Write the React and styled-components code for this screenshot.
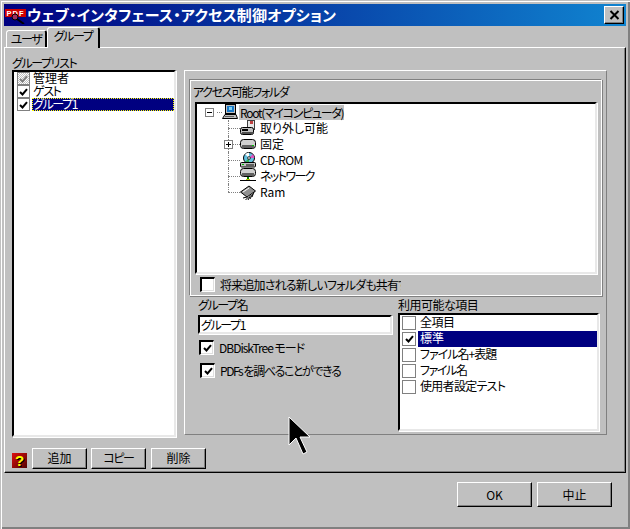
import React from "react";
import styled, { createGlobalStyle, css } from "styled-components";

const Global = createGlobalStyle`
  html, body { margin: 0; padding: 0; background: #c0c0c0; }
  * { box-sizing: border-box; }
  body {
    font-family: "Noto Sans CJK JP", "Liberation Sans", sans-serif;
    font-size: 12px;
    line-height: 14px;
    color: #000;
    font-feature-settings: "palt";
  }
`;

const sunken = css`
  border-style: solid;
  border-width: 2px;
  border-color: #000 #e8e8e8 #e8e8e8 #000;
  box-shadow: 1px 1px 0 #fff;
  background: #fff;
`;
const raised = css`
  background: #c0c0c0;
  border-style: solid;
  border-width: 1px;
  border-color: #fff #000 #000 #fff;
  box-shadow: inset -1px -1px 0 #808080;
`;

const Tight = styled.span`
  letter-spacing: ${(p) => p.$ls ?? -1.4}px;
`;
const Window = styled.div`
  position: relative;
  width: 630px;
  height: 529px;
  padding: 4px;
  background: #c0c0c0;
  box-shadow: inset 1px 1px 0 #c0c0c0, inset 2px 2px 0 #fff, inset -2px -2px 0 #808080, inset -1px -1px 0 #000;
  display: flex;
  flex-direction: column;
`;
const TitleBar = styled.div`
  height: 22px;
  flex: none;
  display: flex;
  align-items: center;
  padding: 0 2px 0 1px;
  background: linear-gradient(90deg, #000080, #1084d0);
  color: #fff;
`;
const TitleText = styled.div`
  flex: 1;
  font-size: 15px;
  font-weight: 700;
  line-height: 22px;
  letter-spacing: 0.2px;
  white-space: nowrap;
`;
const CloseButton = styled.button`
  ${raised}
  width: 20px;
  height: 18px;
  padding: 0;
  display: flex;
  align-items: center;
  justify-content: center;
`;
const TabStrip = styled.div`
  height: 20px;
  flex: none;
  display: flex;
  align-items: flex-end;
  padding-left: 2px;
  margin-top: 1px;
  position: relative;
  z-index: 1;
`;
const Tab = styled.div`
  height: ${(p) => (p.$active ? 21 : 17)}px;
  width: ${(p) => (p.$active ? 53 : 41)}px;
  margin-bottom: ${(p) => (p.$active ? -1 : 0)}px;
  border-style: solid;
  border-width: 1px 2px 0 1px;
  border-color: #fff #000 transparent #fff;
  border-radius: 3px 3px 0 0;
  background: #c0c0c0;
  text-align: center;
  padding-top: 1px;
  white-space: nowrap;
`;
const TabPanel = styled.div`
  width: 622px;
  height: 426px;
  flex: none;
  border-style: solid;
  border-width: 1px;
  border-color: #fff #000 #000 #fff;
  box-shadow: inset -1px -1px 0 #808080;
  padding: 8px 7px 0 7px;
  display: grid;
  grid-template-columns: 164px 1fr;
  grid-template-rows: 388px auto;
  column-gap: 8px;
`;
const ListColumn = styled.div`
  display: flex;
  flex-direction: column;
  padding-bottom: 7px;
`;
const Caption = styled.div`
  height: 14px;
  white-space: nowrap;
`;
const GroupList = styled.div`
  ${sunken}
  flex: 1;
  padding-left: 3px;
`;
const GroupRow = styled.div`
  display: flex;
  align-items: center;
  height: 13px;
  gap: 2px;
`;
const GroupLabel = styled.div`
  flex: 1;
  height: 13px;
  line-height: 12px;
  padding-left: 1px;
  ${(p) =>
    p.$selected &&
    css`
      background: #000080;
      color: #fff;
      outline: 1px dotted #ff0;
      outline-offset: -1px;
    `}
`;
const Check = styled.span`
  width: ${(p) => p.$size || 13}px;
  height: ${(p) => p.$size || 13}px;
  flex: none;
  display: flex;
  align-items: center;
  justify-content: center;
  background: #fff;
  border: 1px solid #808080;
  ${(p) =>
    p.$disabled &&
    css`
      background: repeating-conic-gradient(#c0c0c0 0 25%, #fff 0 50%) 0 0 / 2px 2px;
    `}
`;
const BoxCheck = styled.span`
  width: 15px;
  height: 15px;
  flex: none;
  display: flex;
  align-items: center;
  justify-content: center;
  background: #fff;
  border-style: solid;
  border-width: 2px 1px 1px 2px;
  border-color: #000 #fff #fff #000;
  box-shadow: inset -1px -1px 0 #dfdfdf;
`;
const OuterGroup = styled.div`
  height: 365px;
  margin-top: 14px;
  width: 423px;
  border-style: solid;
  border-width: 1px;
  border-color: #fff #808080 #808080 #fff;
  padding: 8px 5px 0 4px;
`;
const FolderFrame = styled.div`
  width: 413px;
  height: 217px;
  border-style: solid;
  border-width: 1px;
  border-color: #808080 #fff #fff #808080;
  box-shadow: 1px 1px 0 #808080, inset 1px 1px 0 #fff;
  padding: 2px 5px 0 2px;
`;
const FolderCaption = styled.div`
  height: 20px;
  line-height: 20px;
  padding-left: 1px;
  white-space: nowrap;
`;
const Tree = styled.div`
  ${sunken}
  height: 172px;
  width: 402px;
  margin-left: 3px;
  padding: 0 0 0 8px;
`;
const TreeRow = styled.div`
  display: flex;
  align-items: center;
  height: 16px;
  white-space: nowrap;
`;
const ExpanderCell = styled.span`
  width: 12px;
  height: 16px;
  flex: none;
  display: flex;
  align-items: center;
  position: relative;
`;
const Expander = styled.span`
  width: 9px;
  height: 9px;
  background: #fff;
  border: 1px solid #808080;
  position: relative;
  &::before {
    content: "";
    position: absolute;
    left: 1px;
    right: 1px;
    top: 3px;
    height: 1px;
    background: #000;
  }
  ${(p) =>
    p.$plus &&
    css`
      &::after {
        content: "";
        position: absolute;
        top: 1px;
        bottom: 1px;
        left: 3px;
        width: 1px;
        background: #000;
      }
    `}
`;
const Dots = styled.span`
  width: 5px;
  border-top: 1px dotted #808080;
  flex: none;
`;
const RootIcon = styled.span`
  width: 16px;
  height: 16px;
  flex: none;
`;
const RootLabel = styled.span`
  background: #c0c0c0;
  height: 15px;
  line-height: 15px;
  padding: 0 1px;
  margin-left: 1px;
`;
const ChildRow = styled(TreeRow)`
  padding-left: 19px;
`;
const Connector = styled.span`
  width: 16px;
  height: 16px;
  flex: none;
  position: relative;
  &::before {
    content: "";
    position: absolute;
    left: 4px;
    top: 0;
    height: ${(p) => (p.$last ? 8 : 16)}px;
    border-left: 1px dotted #808080;
  }
  &::after {
    content: "";
    position: absolute;
    left: 4px;
    right: 0;
    top: 8px;
    border-top: 1px dotted #808080;
  }
`;
const ConnectorBox = styled(Expander)`
  position: absolute;
  display: block;
  left: 0;
  top: 4px;
  z-index: 1;
`;
const ChildLabel = styled.span`
  margin-left: 4px;
`;
const ShareRow = styled.div`
  display: flex;
  align-items: center;
  gap: 5px;
  margin: 3px 0 0 8px;
  width: 201px;
  overflow: hidden;
  white-space: nowrap;
`;
const FormGrid = styled.div`
  display: grid;
  grid-template-columns: 194px 201px;
  column-gap: 6px;
  padding: 2px 0 0 9px;
`;
const FormColumn = styled.div`
  display: flex;
  flex-direction: column;
`;
const NameInput = styled.div`
  ${sunken}
  height: 19px;
  margin-top: 3px;
  padding-left: 1px;
  line-height: 15px;
`;
const OptionRow = styled.label`
  display: flex;
  align-items: center;
  gap: 5px;
  height: 15px;
  margin-top: ${(p) => p.$top}px;
  margin-left: ${(p) => p.$left}px;
`;
const ItemList = styled.div`
  ${sunken}
  height: 118px;
  margin-top: 1px;
  padding: 0 0 0 2px;
`;
const ItemRow = styled.div`
  display: flex;
  align-items: center;
  height: 16px;
  gap: 2px;
`;
const ItemLabel = styled.div`
  flex: 1;
  height: 16px;
  line-height: 14px;
  padding-left: 2px;
  ${(p) => p.$selected && css`background: #000080; color: #fff;`}
`;
const ActionRow = styled.div`
  grid-column: 1 / 3;
  display: flex;
  align-items: center;
  gap: 4px;
`;
const HelpIcon = styled.span`
  width: 15px;
  height: 15px;
  margin: 4px 1px 0 0;
  background: linear-gradient(135deg, #e01010, #500000);
  color: #ff0;
  font-family: "Liberation Sans", sans-serif;
  font-weight: 700;
  font-size: 15px;
  line-height: 15px;
  text-align: center;
  text-shadow: 1px 1px 0 #000;
`;
const ActionButton = styled.button`
  ${raised}
  font: inherit;
  width: 55px;
  height: 21px;
  margin-left: ${(p) => p.$offset || 0}px;
  padding: 0;
  color: #000;
`;
const Footer = styled.div`
  display: flex;
  justify-content: flex-end;
  gap: 5px;
  padding: 9px 14px 0 0;
`;
const DialogButton = styled.button`
  ${raised}
  font: inherit;
  width: 75px;
  height: 25px;
  padding: 0;
  color: #000;
`;
const CursorOverlay = styled.svg`
  position: absolute;
  left: 286px;
  top: 414px;
`;

const Tick = () => (
  <svg width="9" height="8" viewBox="0 0 9 8">
    <path d="M1 4 L3.5 6.5 L8 1.2" fill="none" stroke="#000" strokeWidth="2" />
  </svg>
);
const GrayTick = () => (
  <svg width="9" height="8" viewBox="0 0 9 8">
    <path d="M1 4 L3.5 6.5 L8 1.2" fill="none" stroke="#808080" strokeWidth="2" />
  </svg>
);

const ComputerIcon = () => (
  <svg width="16" height="16" viewBox="0 0 16 16">
    <rect x="3.5" y="0.5" width="10" height="9" fill="#c0c0c0" stroke="#000" />
    <rect x="5" y="2" width="7" height="6" fill="#1878c8" />
    <rect x="7" y="3" width="3" height="3" fill="#80d0f0" />
    <path d="M3 10.5 L14 10.5 L15.5 14.5 L0.5 14.5 Z" fill="#c0c0c0" stroke="#000" />
    <path d="M3 12.5 L12 12.5" stroke="#606060" />
  </svg>
);
const RemovableIcon = () => (
  <svg width="16" height="16" viewBox="0 0 16 16">
    <rect x="7.5" y="0.5" width="7" height="9" fill="#e8e8e8" stroke="#404040" />
    <rect x="10" y="1" width="3" height="3" fill="#c04040" />
    <rect x="0.5" y="7.5" width="13" height="7" rx="2" fill="#c0c0c0" stroke="#000" />
    <rect x="2" y="9" width="6" height="2" fill="#000" />
    <rect x="2" y="12" width="11" height="2" fill="#505050" />
  </svg>
);
const DriveIcon = () => (
  <svg width="16" height="16" viewBox="0 0 16 16">
    <rect x="0.5" y="3.5" width="15" height="9" rx="3" fill="#d0d0d0" stroke="#000" />
    <rect x="2" y="9" width="12" height="3" fill="#606060" />
    <rect x="12" y="9" width="2" height="1" fill="#00c000" />
  </svg>
);
const CdIcon = () => (
  <svg width="16" height="16" viewBox="0 0 16 16">
    <circle cx="9" cy="6" r="5.5" fill="#60c0e0" stroke="#000" />
    <path d="M9 6 L5 2 L9 0.5 Z" fill="#fff" />
    <path d="M9 6 L14.5 6 L13 2 Z" fill="#e050c0" />
    <path d="M9 6 L5 10 L9 11.5 Z" fill="#30b050" />
    <circle cx="9" cy="6" r="1.5" fill="#c0c0c0" stroke="#000" strokeWidth="0.6" />
    <rect x="0.5" y="10.5" width="15" height="4.5" rx="1" fill="#c0c0c0" stroke="#000" />
    <rect x="2" y="12" width="2" height="1" fill="#00c000" />
    <rect x="6" y="12" width="8" height="2" fill="#606060" />
  </svg>
);
const NetworkIcon = () => (
  <svg width="16" height="16" viewBox="0 0 16 16">
    <rect x="0.5" y="0.5" width="15" height="8" rx="3" fill="#d0d0d0" stroke="#000" />
    <rect x="2" y="5" width="12" height="3" fill="#606060" />
    <rect x="7" y="9" width="2" height="3" fill="#008000" />
    <rect x="6" y="11" width="4" height="2" fill="#c0c000" />
    <rect x="0" y="12" width="16" height="1" fill="#000" />
  </svg>
);
const ChipIcon = () => (
  <svg width="16" height="16" viewBox="0 0 16 16">
    <path d="M7 13 L3 14 M8.5 13 L5.5 16 M10.5 11.5 L8 16 M12.5 10 L10 15 M14 8 L12 13" stroke="#000" />
    <path d="M0.5 8 L9 2 L15.5 7 L7 13 Z" fill="#909090" stroke="#000" />
    <path d="M3 8 L9 4" stroke="#fff" />
  </svg>
);
const PdfIcon = () => (
  <svg width="22" height="18" viewBox="0 0 22 18">
    <rect x="0" y="3" width="21" height="8" fill="#d00000" />
    <text x="10.5" y="10" textAnchor="middle" fontFamily="Liberation Sans" fontWeight="700" fontSize="7.5" letterSpacing="1" fill="#fff">PDF</text>
    <circle cx="10" cy="11" r="3" fill="#a03060" stroke="#000" />
    <path d="M12 13 L19 18" stroke="#000" strokeWidth="2" />
  </svg>
);

const children = [
  { label: "取り外し可能", Icon: RemovableIcon, ls: 0 },
  { label: "固定", Icon: DriveIcon, plus: true, ls: 0 },
  { label: "CD-ROM", Icon: CdIcon, ls: -0.6 },
  { label: "ネットワーク", Icon: NetworkIcon, ls: -1.6 },
  { label: "Ram", Icon: ChipIcon, last: true, ls: 0 },
];
const items = [
  { label: "全項目", ls: -0.5 },
  { label: "標準", on: true, ls: 0 },
  { label: "ファイル名+表題", ls: -1 },
  { label: "ファイル名", ls: -1.4 },
  { label: "使用者設定テスト", ls: -0.7 },
];

export default function App() {
  return (
    <Window>
      <Global />
      <TitleBar>
        <PdfIcon />
        <TitleText>ウェブ・インタフェース・アクセス制御オプション</TitleText>
        <CloseButton aria-label="close">
          <svg width="11" height="10" viewBox="0 0 11 10">
            <path d="M1.5 1 L9.5 9 M9.5 1 L1.5 9" stroke="#000" strokeWidth="2" />
          </svg>
        </CloseButton>
      </TitleBar>
      <TabStrip>
        <Tab><Tight>ユーザ</Tight></Tab>
        <Tab $active><Tight>グループ</Tight></Tab>
      </TabStrip>
      <TabPanel>
        <ListColumn>
          <Caption><Tight>グループリスト</Tight></Caption>
          <GroupList>
            <GroupRow>
              <Check $disabled><GrayTick /></Check>
              <GroupLabel>管理者</GroupLabel>
            </GroupRow>
            <GroupRow>
              <Check><Tick /></Check>
              <GroupLabel><Tight>ゲスト</Tight></GroupLabel>
            </GroupRow>
            <GroupRow>
              <Check><Tick /></Check>
              <GroupLabel $selected><Tight>グループ1</Tight></GroupLabel>
            </GroupRow>
          </GroupList>
        </ListColumn>
        <OuterGroup>
          <FolderFrame>
            <FolderCaption><Tight>アクセス可能フォルダ</Tight></FolderCaption>
            <Tree>
              <TreeRow>
                <ExpanderCell><Expander /></ExpanderCell>
                <Dots />
                <RootIcon><ComputerIcon /></RootIcon>
                <RootLabel><Tight $ls={-1.3}>Root(マイコンピュータ)</Tight></RootLabel>
              </TreeRow>
              {children.map(({ label, Icon, plus, last, ls }) => (
                <ChildRow key={label}>
                  <Connector $last={last}>
                    {plus && <ConnectorBox $plus />}
                  </Connector>
                  <Icon />
                  <ChildLabel><Tight $ls={ls}>{label}</Tight></ChildLabel>
                </ChildRow>
              ))}
            </Tree>
            <ShareRow>
              <BoxCheck />
              <Tight $ls={-0.8}>将来追加される新しいフォルダも共有する</Tight>
            </ShareRow>
          </FolderFrame>
          <FormGrid>
            <FormColumn>
              <Caption><Tight>グループ名</Tight></Caption>
              <NameInput><Tight>グループ1</Tight></NameInput>
              <OptionRow $top={6} $left={1}>
                <BoxCheck><Tick /></BoxCheck>
                <Tight $ls={-1}>DBDiskTree モード</Tight>
              </OptionRow>
              <OptionRow $top={8} $left={2}>
                <BoxCheck><Tick /></BoxCheck>
                <Tight>PDFs を調べることができる</Tight>
              </OptionRow>
            </FormColumn>
            <FormColumn>
              <Caption><Tight $ls={-0.5}>利用可能な項目</Tight></Caption>
              <ItemList>
                {items.map((item) => (
                  <ItemRow key={item.label}>
                    <Check $size={14}>{item.on && <Tick />}</Check>
                    <ItemLabel $selected={item.on}><Tight $ls={item.ls}>{item.label}</Tight></ItemLabel>
                  </ItemRow>
                ))}
              </ItemList>
            </FormColumn>
          </FormGrid>
        </OuterGroup>
        <ActionRow>
          <HelpIcon>?</HelpIcon>
          <ActionButton>追加</ActionButton>
          <ActionButton><Tight>コピー</Tight></ActionButton>
          <ActionButton $offset={1}>削除</ActionButton>
        </ActionRow>
      </TabPanel>
      <Footer>
        <DialogButton>OK</DialogButton>
        <DialogButton>中止</DialogButton>
      </Footer>
      <CursorOverlay width="28" height="44" viewBox="0 0 28 44">
        <path d="M3 3 L3 31 L10 24 L17 40 L21 38 L14 23 L24 23 Z" fill="#000" stroke="#fff" strokeWidth="1" />
      </CursorOverlay>
    </Window>
  );
}
